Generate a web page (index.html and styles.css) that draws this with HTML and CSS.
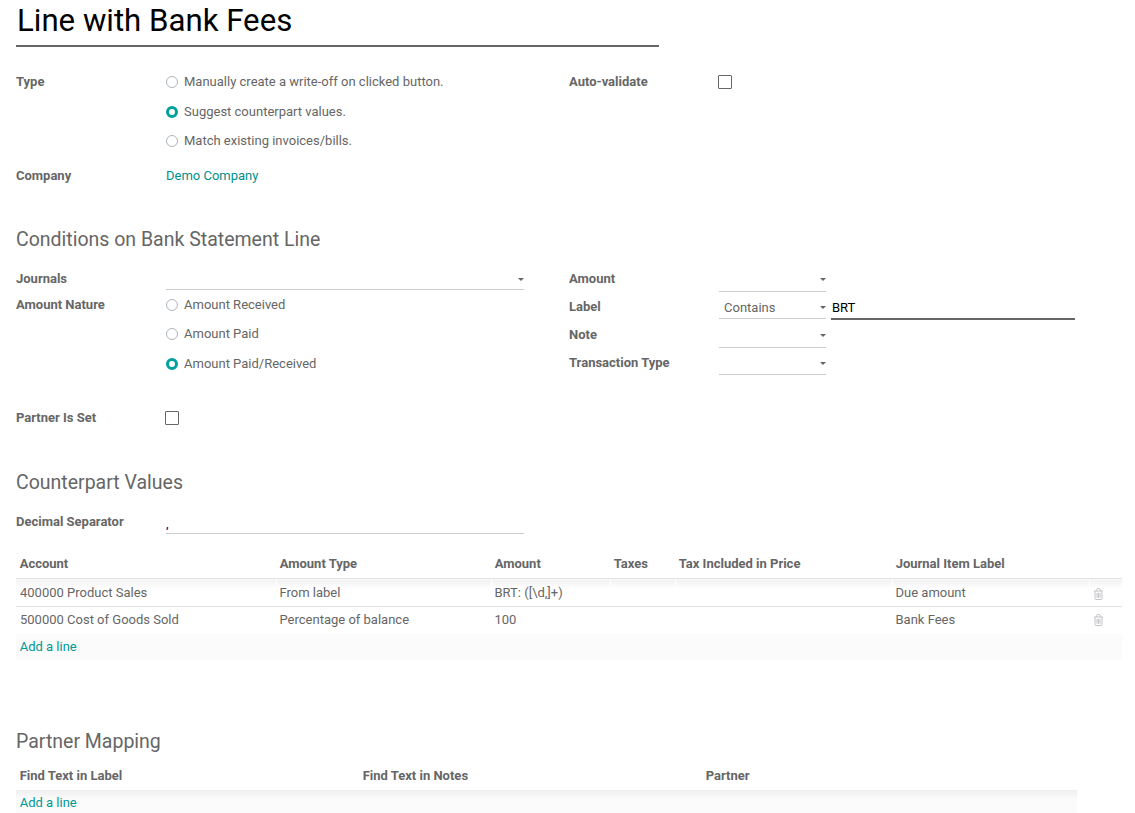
FILE: index.html
```html
<!DOCTYPE html>
<html lang="en">
<head>
    <meta charset="UTF-8">
    <title>Line with Bank Fees</title>
    <link rel="stylesheet" href="styles.css">
</head>
<body>
    <h1 class="title">Line with Bank Fees</h1>

    <div class="group group-top">
        <div class="col">
            <div class="field">
                <div class="label">Type</div>
                <div class="radios">
                    <div class="radio"><span class="dot"></span>Manually create a write-off on clicked button.</div>
                    <div class="radio"><span class="dot on"></span>Suggest counterpart values.</div>
                    <div class="radio"><span class="dot"></span>Match existing invoices/bills.</div>
                </div>
            </div>
            <div class="field field-company">
                <div class="label">Company</div>
                <a class="link link-dark">Demo Company</a>
            </div>
        </div>
        <div class="col">
            <div class="field">
                <div class="label">Auto-validate</div>
                <span class="check"></span>
            </div>
        </div>
    </div>

    <h2 class="section section-cond">Conditions on Bank Statement Line</h2>
    <div class="group group-cond">
        <div class="col">
            <div class="field">
                <div class="label">Journals</div>
                <div class="select select-wide"><span class="caret"></span></div>
            </div>
            <div class="field field-nature">
                <div class="label">Amount Nature</div>
                <div class="radios">
                    <div class="radio"><span class="dot"></span>Amount Received</div>
                    <div class="radio"><span class="dot"></span>Amount Paid</div>
                    <div class="radio"><span class="dot on"></span>Amount Paid/Received</div>
                </div>
            </div>
            <div class="field field-partner">
                <div class="label">Partner Is Set</div>
                <span class="check"></span>
            </div>
        </div>
        <div class="col">
            <div class="field field-cond">
                <div class="label">Amount</div>
                <div class="select"><span class="caret"></span></div>
            </div>
            <div class="field field-cond">
                <div class="label">Label</div>
                <div class="select select-short">Contains<span class="caret"></span></div>
                <div class="input-active">BRT</div>
            </div>
            <div class="field field-cond">
                <div class="label">Note</div>
                <div class="select"><span class="caret"></span></div>
            </div>
            <div class="field field-cond">
                <div class="label">Transaction Type</div>
                <div class="select select-short"><span class="caret"></span></div>
            </div>
        </div>
    </div>

    <h2 class="section section-counter">Counterpart Values</h2>
    <div class="field field-decimal">
        <div class="label">Decimal Separator</div>
        <div class="input-plain">,</div>
    </div>

    <table class="lines lines-counter">
        <colgroup>
            <col class="c-account"><col class="c-type"><col class="c-amount"><col class="c-taxes">
            <col class="c-incl"><col class="c-label"><col class="c-trash">
        </colgroup>
        <thead>
            <tr>
                <th>Account</th>
                <th>Amount Type</th>
                <th>Amount</th>
                <th>Taxes</th>
                <th>Tax Included in Price</th>
                <th>Journal Item Label</th>
                <th></th>
            </tr>
        </thead>
        <tbody>
            <tr class="row row-first">
                <td>400000 Product Sales</td>
                <td>From label</td>
                <td>BRT: ([\d,]+)</td>
                <td></td>
                <td></td>
                <td>Due amount</td>
                <td class="trash"><svg width="11" height="12" viewBox="0 0 11 12"><path d="M1 3h9M2 3v7.5a1 1 0 0 0 1 1h5a1 1 0 0 0 1-1V3M3.8 3V1.3a.8.8 0 0 1 .8-.8h1.8a.8.8 0 0 1 .8.8V3M4 4.8v5M5.5 4.8v5M7 4.8v5" fill="none" stroke="#c4c4c8" stroke-width="1"/></svg></td>
            </tr>
            <tr class="row row-last">
                <td>500000 Cost of Goods Sold</td>
                <td>Percentage of balance</td>
                <td>100</td>
                <td></td>
                <td></td>
                <td>Bank Fees</td>
                <td class="trash"><svg width="11" height="12" viewBox="0 0 11 12"><path d="M1 3h9M2 3v7.5a1 1 0 0 0 1 1h5a1 1 0 0 0 1-1V3M3.8 3V1.3a.8.8 0 0 1 .8-.8h1.8a.8.8 0 0 1 .8.8V3M4 4.8v5M5.5 4.8v5M7 4.8v5" fill="none" stroke="#c4c4c8" stroke-width="1"/></svg></td>
            </tr>
            <tr class="add">
                <td colspan="7"><a class="link">Add a line</a></td>
            </tr>
        </tbody>
    </table>

    <h2 class="section section-partner">Partner Mapping</h2>
    <table class="lines lines-partner">
        <colgroup>
            <col class="c-find"><col class="c-notes"><col>
        </colgroup>
        <thead>
            <tr>
                <th>Find Text in Label</th>
                <th>Find Text in Notes</th>
                <th>Partner</th>
            </tr>
        </thead>
        <tbody>
            <tr class="add add-first">
                <td colspan="3"><a class="link">Add a line</a></td>
            </tr>
        </tbody>
    </table>
</body>
</html>
```

FILE: styles.css
```css
html, body {
    height: 813px;
    overflow: hidden;
}

body {
    margin: 0;
    padding: 0 0 0 16px;
    background-color: #fff;
    color: #666;
    font-family: Roboto, "Noto Sans", sans-serif;
    font-size: 13px;
    line-height: 18px;
}

.title {
    box-sizing: border-box;
    width: 643px;
    height: 47px;
    margin: 0;
    padding: 1px 0 0 1px;
    border-bottom: 2px solid #666;
    color: #000;
    font-size: 31.2px;
    font-weight: 400;
    line-height: 40px;
}

.group {
    display: grid;
    grid-template-columns: 553px 1fr;
}

.group-top {
    margin-top: 26px;
}

.field {
    display: flex;
    align-items: flex-start;
}

.label {
    flex: none;
    width: 150px;
    font-weight: 700;
}

.radios {
    display: flex;
    flex-direction: column;
    gap: 11.5px;
}

.radio {
    display: flex;
    align-items: center;
    height: 18px;
}

.dot {
    box-sizing: border-box;
    width: 12px;
    height: 12px;
    margin-right: 6px;
    border: 1px solid #adb5bd;
    border-radius: 50%;
    background-color: #fff;
}

.dot.on {
    border: 3.5px solid #00a09d;
}

.check {
    box-sizing: border-box;
    width: 14px;
    height: 14px;
    margin: 2px 0 0 -1px;
    border: 1px solid #666;
    border-radius: 1px;
}

.link {
    color: #009895;
}

.link-dark {
    color: #008f8c;
}

.field-company {
    margin-top: 17px;
}

.section {
    margin: 0;
    color: #666;
    font-size: 19.5px;
    font-weight: 400;
    line-height: 26px;
}

.section-cond {
    margin-top: 42px;
}

.group-cond {
    margin-top: 17px;
}

.select {
    position: relative;
    box-sizing: border-box;
    flex: none;
    width: 107px;
    height: 22px;
    padding: 1px 0 0 5px;
    border-bottom: 1px solid #ccc;
}

.select-short {
    height: 21px;
}

.select-wide {
    width: 358px;
    height: 20px;
}

.caret {
    position: absolute;
    top: 8px;
    right: 0;
    border-top: 3px solid #666;
    border-left: 3px solid transparent;
    border-right: 3px solid transparent;
}

.field-nature {
    margin-top: 5.6px;
}

.field-partner {
    margin-top: 36.5px;
}

.field-cond {
    height: 28px;
}

.input-active {
    box-sizing: border-box;
    width: 244px;
    height: 22px;
    margin-left: 5px;
    padding: 1px 0 0 1px;
    border-bottom: 2px solid #666;
    color: #000;
}

.section-counter {
    margin-top: 43.4px;
}

.field-decimal {
    margin-top: 17px;
}

.input-plain {
    box-sizing: border-box;
    width: 358px;
    height: 20px;
    margin-top: 1px;
    padding-top: 1px;
    border-bottom: 1px solid #ccc;
    color: #000080;
}

.lines {
    border-collapse: collapse;
    table-layout: fixed;
}

.lines-counter {
    width: 1106px;
    margin-top: 15px;
}

.lines-partner {
    width: 1061px;
    margin-top: 6px;
}

.c-account { width: 260px; }
.c-type { width: 215px; }
.c-amount { width: 119px; }
.c-taxes { width: 65px; }
.c-incl { width: 217px; }
.c-label { width: 197px; }
.c-find { width: 343px; }
.c-notes { width: 343px; }

.lines th {
    height: 29px;
    padding: 0 4px 0 3.7px;
    border-bottom: 1px solid #dee2e6;
    font-weight: 700;
    text-align: left;
}

.lines td {
    height: 26px;
    padding: 0 4px 0 3.7px;
}

.lines .row td {
    height: 25px;
    padding-left: 3px;
    border-bottom: 1px solid #dee2e6;
    border-left: 1px solid #fff;
}

.lines .row td:first-child {
    padding-left: 4px;
    border-left: 0;
}

.row-first td {
    background: linear-gradient(#f2f2f2, #fff 10px);
}

.lines .row-last td {
    height: 26px;
    padding-bottom: 1px;
    border-bottom: 0;
}

.lines .row td.trash {
    padding: 2px 0 0 3px;
}

.lines .row-last td.trash {
    padding: 0 0 1px 3px;
}

.trash svg {
    display: block;
}

.add td {
    background-color: #fbfbfb;
}

.lines-partner th {
    border-bottom: 0;
}

.add-first td {
    background: linear-gradient(#efefef, #fbfbfb 9px);
}

.section-partner {
    margin-top: 69px;
}
```
